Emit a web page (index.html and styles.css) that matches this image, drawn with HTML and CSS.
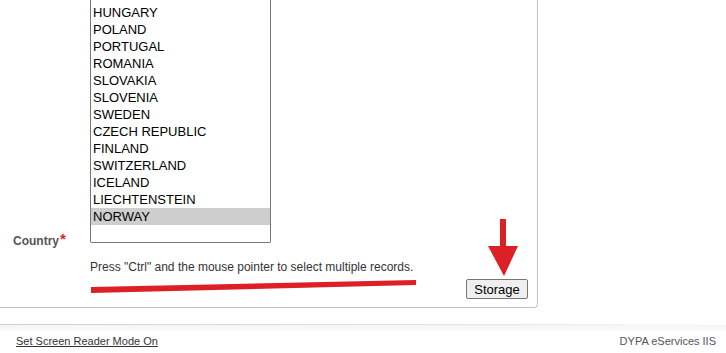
FILE: index.html
```html
<!DOCTYPE html>
<html lang="en">
<head>
    <meta charset="UTF-8">
    <meta name="viewport" content="width=device-width, initial-scale=1.0">
    <title>DYPA eServices - Country</title>
    <link rel="stylesheet" href="styles.css">
</head>
<body>
    <div class="panel">
        <div class="field">
            <label class="field-label">Country<span class="required">*</span></label>
            <div class="field-input">
                <ul class="listbox">
                    <li>HUNGARY</li>
                    <li>POLAND</li>
                    <li>PORTUGAL</li>
                    <li>ROMANIA</li>
                    <li>SLOVAKIA</li>
                    <li>SLOVENIA</li>
                    <li>SWEDEN</li>
                    <li>CZECH REPUBLIC</li>
                    <li>FINLAND</li>
                    <li>SWITZERLAND</li>
                    <li>ICELAND</li>
                    <li>LIECHTENSTEIN</li>
                    <li class="selected">NORWAY</li>
                </ul>
                <div class="hint">Press "Ctrl" and the mouse pointer to select multiple records.</div>
            </div>
        </div>
        <div class="actions">
            <button class="btn">Storage</button>
        </div>

        <!-- annotation marks drawn over the form -->
        <svg class="mark-line" width="330" height="16" viewBox="0 0 330 16">
            <polygon points="1,7 326,0 326,5 1,13" fill="#dd1f26"/>
        </svg>
        <svg class="mark-arrow" width="32" height="60" viewBox="0 0 32 60">
            <rect x="12" y="0" width="6" height="28" fill="#dd1f26"/>
            <polygon points="0,27 30,27 16,57" fill="#dd1f26"/>
        </svg>
    </div>

    <div class="footer">
        <a class="footer-link" href="#">Set Screen Reader Mode On</a>
        <span class="footer-brand">DYPA eServices IIS</span>
    </div>
</body>
</html>
```

FILE: styles.css
```css
body {
    margin: 0;
    font-family: "Liberation Sans", Arial, sans-serif;
    background-color: #fff;
    color: #333;
}
.panel {
    position: relative;
    width: 537px;
    border-right: 1px solid #c4c4c4;
    border-bottom: 1px solid #c4c4c4;
    border-bottom-right-radius: 4px;
    padding-bottom: 8px;
}
.field {
    display: flex;
    align-items: flex-end;
}
.field-label {
    width: 77px;
    padding-left: 13px;
    font-size: 12px;
    font-weight: bold;
    line-height: 15px;
    color: #555;
    align-self: flex-start;
    margin-top: 234px;
}
.required {
    color: #e0202a;
    font-size: 15px;
    line-height: 10px;
    vertical-align: top;
    margin-left: 1px;
}
.field-input {
    display: flex;
    flex-direction: column;
}
.listbox {
    list-style: none;
    margin: 0;
    padding: 4px 0 17px 0;
    width: 179px;
    border: 1px solid #767676;
    border-top: none;
    border-radius: 0 0 2px 2px;
    font-size: 13px;
    color: #000;
}
.listbox li {
    height: 17px;
    line-height: 17px;
    padding-left: 2px;
}
.listbox li.selected {
    background-color: #cecece;
}
.hint {
    margin-top: 17px;
    font-size: 12px;
    line-height: 15px;
    color: #333;
}
.actions {
    display: flex;
    justify-content: flex-end;
    padding-right: 9px;
    margin-top: 4px;
}
.btn {
    font-family: "Liberation Sans", Arial, sans-serif;
    font-size: 13px;
    height: 20px;
    width: 62px;
    padding: 0;
    color: #000;
    background-color: #efefef;
    border: 1px solid #767676;
    border-radius: 2px;
}
.mark-line {
    position: absolute;
    left: 90px;
    top: 280px;
}
.mark-arrow {
    position: absolute;
    left: 488px;
    top: 219px;
}
.footer {
    margin-top: 16px;
    display: flex;
    justify-content: space-between;
    padding: 10px 10px 0 16px;
    font-size: 11px;
    line-height: 15px;
    background-image: linear-gradient(to right, #cfcfcf, #e6e6e6 70%, #fff), linear-gradient(#f4f4f4, #fff);
    background-size: 100% 1px, 100% 8px;
    background-position: 0 0, 0 1px;
    background-repeat: no-repeat;
}
.footer-link {
    color: #333;
    text-decoration: underline;
}
.footer-brand {
    color: #555;
}
```
